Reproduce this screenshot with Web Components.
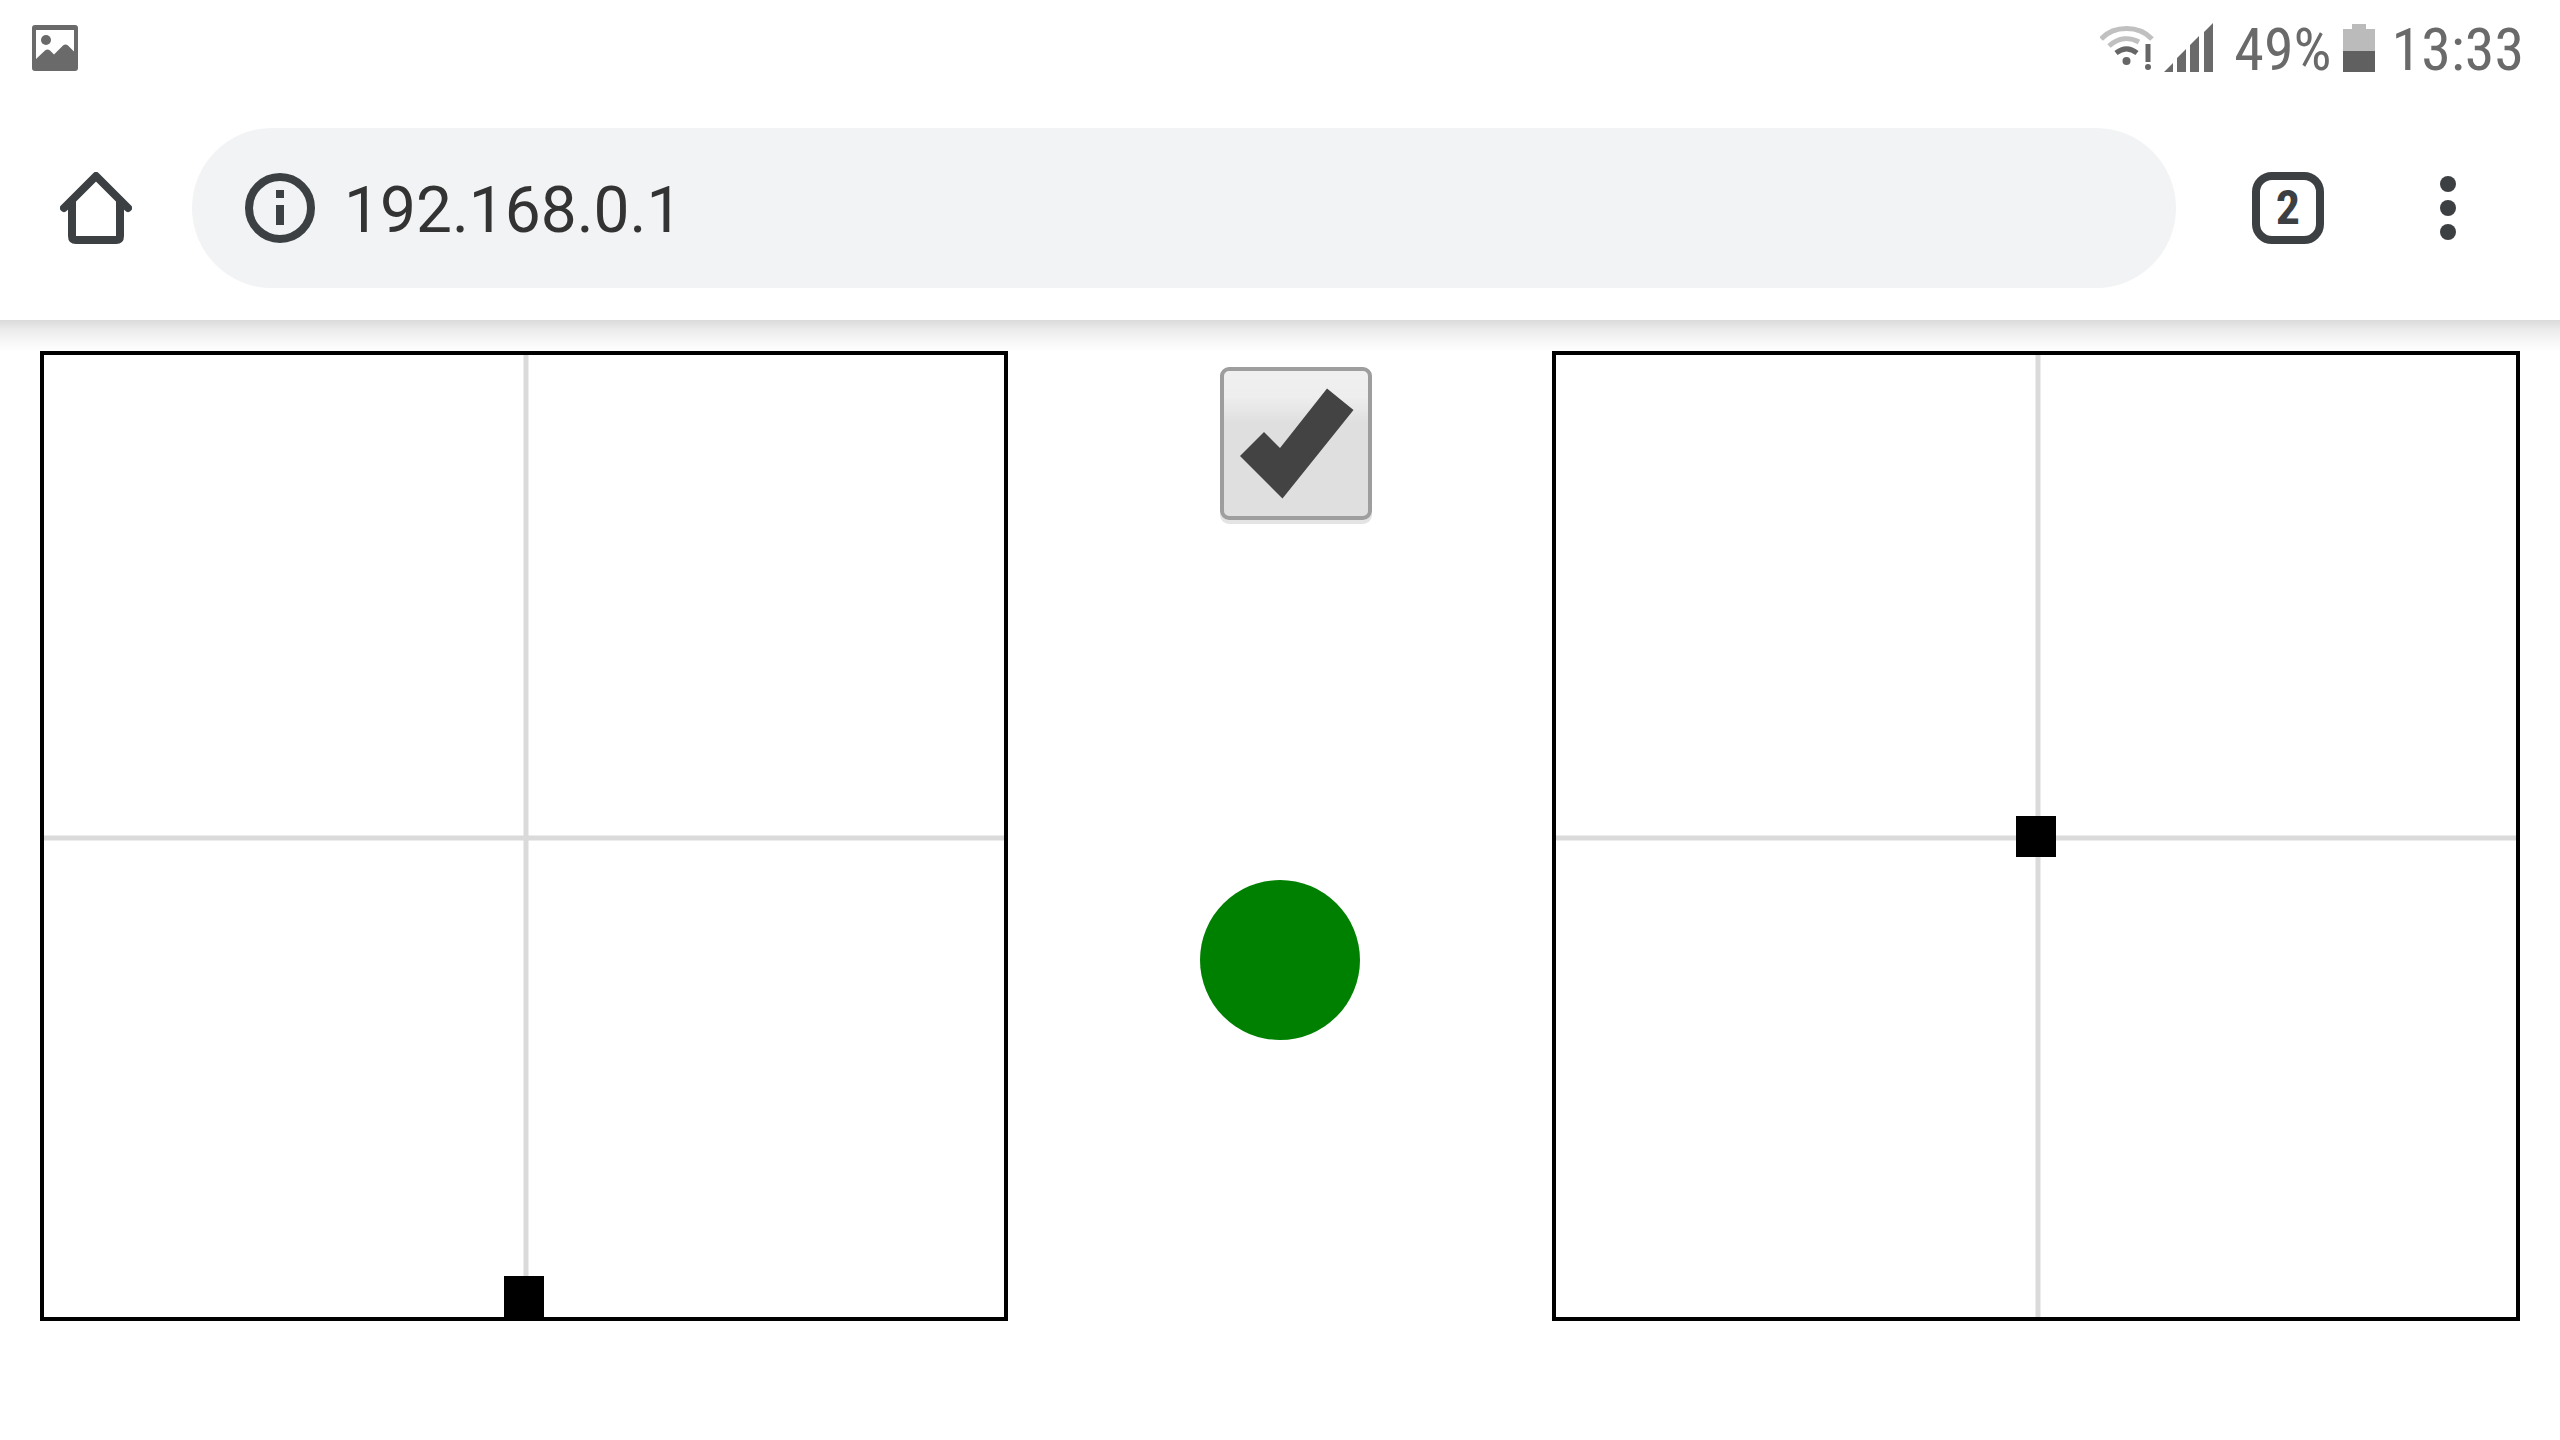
<!DOCTYPE html>
<html lang="en">
<head>
<meta charset="utf-8">
<title>192.168.0.1</title>
<style>
  body { margin: 0; background: #fff; font-family: Roboto, sans-serif; }
</style>
</head>
<body>
<remote-screen></remote-screen>
<script>
const define = (name, html, setup) => customElements.define(name, class extends HTMLElement {
  constructor() {
    super();
    const root = this.attachShadow({ mode: 'open' });
    root.innerHTML = html;
  }
  connectedCallback() { if (setup) setup(this); }
});

define('status-bar', `
  <style>
    :host { display: flex; align-items: center; justify-content: space-between; height: 96px; padding: 0 36px 0 32px;
      box-sizing: border-box; color: #6a6a6a; font: 60px/72px "Roboto Condensed", "Liberation Sans Narrow", Roboto, sans-serif; }
    div { display: flex; align-items: center; }
    svg { display: block; }
    span { padding-top: 4px; }
    .signal { margin: 0 20px 0 8px; }
    .battery { margin: 0 17px 0 11px; }
  </style>
  <svg width="46" height="46" viewBox="0 0 46 46" fill="#6a6a6a"><path fill-rule="evenodd" d="M3 0H43Q46 0 46 3V43Q46 46 43 46H3Q0 46 0 43V3Q0 0 3 0ZM4 5V34L13 25.500Q15.500 23.500 18 25.500L22 29.500L31 20.500Q33.500 18.500 36 20.500L42 26.500V5Z"/><circle cx="14" cy="15" r="5"/></svg>
  <div>
    <svg width="56" height="48" viewBox="0 0 56 48" fill="none" stroke-width="5">
      <path stroke="#c0c0c0" d="M1 15C14 1 39 1 52 15M9 22C19 13 30 13 39 18"/>
      <path stroke="#666" d="M16 29C23 23.500 30 23.500 37 29M48 20V38"/>
      <circle cx="26.500" cy="37" r="4" fill="#666"/><circle cx="48" cy="43" r="3" fill="#666"/>
    </svg>
    <svg class="signal" width="50" height="50" viewBox="0 0 50 50" fill="#6a6a6a"><path d="M0 49L9 40V49ZM13 49V35L22 26V49ZM26 49V22L35 13V49ZM40 49V9L49 0V49Z"/></svg>
    <span>49%</span>
    <svg class="battery" width="32" height="48" viewBox="0 0 32 48"><path fill="#bbb" d="M9 0H23V5H32V27H0V5H9Z"/><path fill="#606060" d="M0 27H32V48H0Z"/></svg>
    <span>13:33</span>
  </div>
`);

define('browser-bar', `
  <style>
    :host { display: flex; align-items: center; position: relative; height: 224px; padding-right: 32px; box-sizing: border-box; background: #fff; }
    :host::after { content: ""; position: absolute; left: 0; right: 0; top: 100%; height: 32px;
      background: linear-gradient(#dadada, #ebebeb 30%, #f8f8f8 70%, #fff); }
    button { display: flex; align-items: center; justify-content: center; width: 160px; height: 160px; padding: 0; border: 0; background: none; color: #3c4043; }
    .home { width: 192px; }
    label { flex: 1; min-width: 0; display: flex; align-items: center; gap: 24px; height: 160px; padding: 0 52px; margin-right: 32px;
      box-sizing: border-box; border-radius: 80px; background: #f1f3f4; }
    input { flex: 1; min-width: 0; height: 80px; border: 0; padding: 6px 4px 0; outline: 0; background: none; color: #333; font: 64px/80px Roboto, sans-serif; }
    .count { display: flex; align-items: center; justify-content: center; box-sizing: border-box; width: 72px; height: 72px; border: 8px solid; border-radius: 20px;
      font: bold 48px/56px "Roboto Condensed", "Liberation Sans Narrow", Roboto, sans-serif; }
  </style>
  <button class="home" aria-label="Home"><svg width="72" height="72" viewBox="0 0 72 72" fill="none" stroke="#3c4043" stroke-width="8" stroke-linecap="round" stroke-linejoin="round"><path d="M4 36L36 4L68 36"/><path d="M12 29V64Q12 68 16 68H56Q60 68 60 64V29"/></svg></button>
  <label>
    <svg width="72" height="72" viewBox="0 0 72 72"><circle cx="36" cy="36" r="31" fill="none" stroke="#3c4043" stroke-width="8"/><path fill="#3c4043" d="M32 18H40V26H32ZM32 33H40V53H32Z"/></svg>
    <input type="text" value="192.168.0.1" aria-label="Address" spellcheck="false">
  </label>
  <button aria-label="Tabs"><span class="count">2</span></button>
  <button aria-label="Menu"><svg width="16" height="64" viewBox="0 0 16 64" fill="#3c4043"><circle cx="8" cy="8" r="8"/><circle cx="8" cy="32" r="8"/><circle cx="8" cy="56" r="8"/></svg></button>
`);

define('joy-pad', `
  <style>
    :host { display: block; flex: 1; aspect-ratio: 968 / 970; box-sizing: border-box; border: 4px solid #000; position: relative; z-index: 1; background: #fff; }
    svg { display: block; width: 100%; height: 100%; }
  </style>
  <svg viewBox="0 0 960 962"><path d="M482 0V962M0 483H960" stroke="#dadada" stroke-width="5"/><rect x="460" width="40" height="41"/></svg>
`, el => el.shadowRoot.querySelector('rect').setAttribute('y', el.getAttribute('knob')));

define('check-switch', `
  <style>
    :host { display: block; }
    input { display: block; appearance: none; box-sizing: border-box; width: 152px; height: 153px; margin: 0; border: 4px solid #9e9e9e; border-radius: 9px;
      background: linear-gradient(#f0f0f0, #eee 18%, #dfdfdf 36%, #dfdfdf); box-shadow: 0 4px 0 #e4e4e4; }
    label { display: grid; }
    label > * { grid-area: 1 / 1; }
    svg { z-index: 1; pointer-events: none; }
  </style>
  <label><input type="checkbox" checked aria-label="Enable">
  <svg width="152" height="153" viewBox="0 0 152 153"><path fill="#434343" d="M20 89L44 65L60 81L107 21.500L133.500 43L62.500 131.500Z"/></svg></label>
`);

define('status-light', `<style>:host { display: block; width: 160px; height: 160px; border-radius: 50%; background: #008000; }</style>`);

define('remote-screen', `
  <style>
    :host { display: block; }
    main { display: flex; align-items: flex-start; padding: 31px 40px 0; }
    section { display: flex; flex-direction: column; align-items: center; width: 544px; }
    check-switch { margin: 16px 0 0 32px; }
    status-light { margin-top: 360px; }
  </style>
  <status-bar></status-bar>
  <browser-bar></browser-bar>
  <main>
    <joy-pad knob="921"></joy-pad>
    <section><check-switch></check-switch><status-light></status-light></section>
    <joy-pad knob="461"></joy-pad>
  </main>
`);
</script>
</body>
</html>
